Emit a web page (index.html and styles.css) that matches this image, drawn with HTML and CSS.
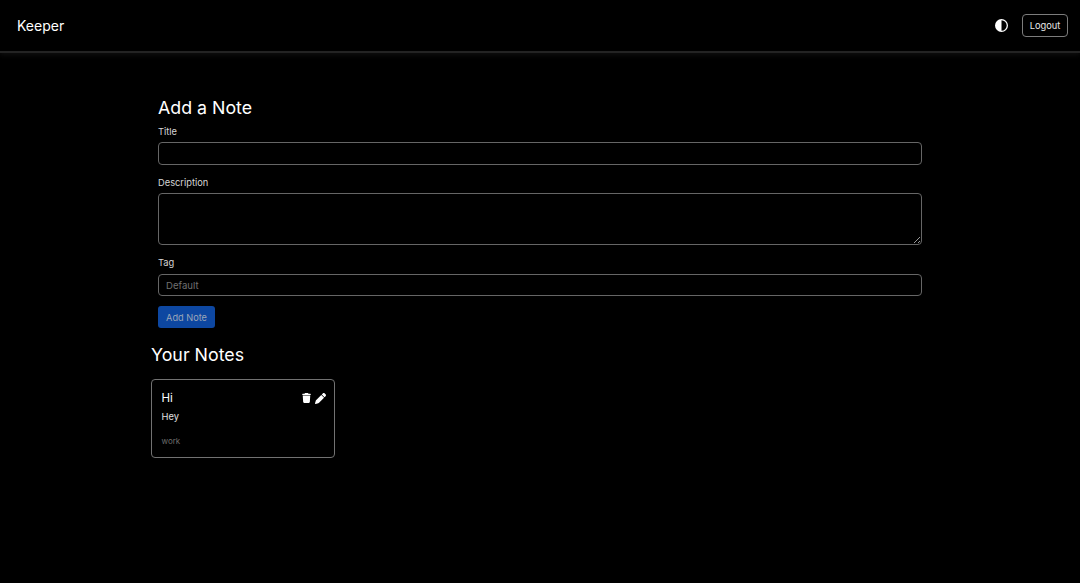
FILE: index.html
```html
<!DOCTYPE html>
<html lang="en">
<head>
<meta charset="utf-8">
<title>Keeper</title>
<link rel="stylesheet" href="styles.css">
</head>
<body>
<nav class="navbar">
  <span class="brand">Keeper</span>
  <div class="nav-actions">
    <svg class="theme-icon" viewBox="0 0 16 16" aria-hidden="true"><path fill="#fff" d="M8 0a8 8 0 1 0 0 16A8 8 0 0 0 8 0zm0 1.6v12.8A6.4 6.4 0 0 1 8 1.6z" transform="matrix(-1 0 0 1 16 0)"/></svg>
    <button class="logout">Logout</button>
  </div>
</nav>
<main class="container">
  <section class="add-note">
    <h2 class="heading">Add a Note</h2>
    <label class="label" for="title">Title</label>
    <input class="field" id="title" type="text">
    <label class="label" for="description">Description</label>
    <textarea class="field area" id="description"></textarea>
    <label class="label" for="tag">Tag</label>
    <input class="field" id="tag" type="text" placeholder="Default">
    <button class="submit">Add Note</button>
  </section>
  <h2 class="heading notes-heading">Your Notes</h2>
  <article class="card">
    <div class="card-top">
      <h3 class="card-title">Hi</h3>
      <div class="card-icons">
        <svg class="icon trash" viewBox="0 0 448 512" aria-hidden="true"><path fill="#fff" d="M135.2 17.7L128 32H32C14.3 32 0 46.3 0 64S14.3 96 32 96H416c17.7 0 32-14.3 32-32s-14.3-32-32-32H320l-7.2-14.3C307.4 6.8 296.3 0 284.2 0H163.8c-12.1 0-23.2 6.8-28.6 17.7zM416 128H32L53.2 467c1.6 25.3 22.6 45 47.9 45H346.9c25.3 0 46.3-19.7 47.9-45L416 128z"/></svg>
        <svg class="icon pen" viewBox="0 0 512 512" aria-hidden="true"><path fill="#fff" d="M362.7 19.3L314.3 67.7 444.3 197.7l48.4-48.4c25-25 25-65.5 0-90.5L453.3 19.3c-25-25-65.5-25-90.5 0zm-71 71L58.6 323.5c-10.4 10.4-18 23.3-22.2 37.4L1 481.2C-1.5 489.7 .8 498.8 7 505s15.3 8.5 23.7 6.1l120.3-35.4c14.1-4.2 27-11.8 37.4-22.2L421.7 220.3 291.7 90.3z"/></svg>
      </div>
    </div>
    <p class="card-text">Hey</p>
    <p class="card-tag">work</p>
  </article>
</main>
</body>
</html>
```

FILE: styles.css
```css
* { box-sizing: border-box; }
html, body { margin: 0; height: 100%; }
body {
  background: #000;
  color: #fff;
  font-family: Inter, "Liberation Sans", sans-serif;
  font-size: 10px;
  overflow: hidden;
}
.navbar {
  height: 53px;
  display: flex;
  align-items: center;
  justify-content: space-between;
  padding: 0 12px 0 17px;
  border-bottom: 2px solid #232323;
  box-shadow: 0 2px 5px rgba(255, 255, 255, 0.06);
}
.brand { font-size: 14px; line-height: 20px; }
.nav-actions { display: flex; align-items: center; gap: 14px; }
.theme-icon { width: 13px; height: 13px; display: block; }
.logout {
  width: 46px;
  height: 23px;
  padding: 0;
  background: transparent;
  color: #e6e6e6;
  font: 9.3px Inter, "Liberation Sans", sans-serif;
  border: 1px solid #7c7c7c;
  border-radius: 4px;
}
.container { width: 778px; margin: 0 auto; padding-top: 43px; }
.add-note { display: flex; flex-direction: column; align-items: flex-start; padding: 0 7px; }
.heading { margin: 0; font-size: 17.8px; font-weight: 400; line-height: 24px; }
.label { font-size: 9.3px; line-height: 12px; color: #d6d6d6; margin-bottom: 4px; }
.add-note .heading + .label { margin-top: 6px; }
.field {
  display: block;
  width: 100%;
  height: 23px;
  margin: 0 0 12px;
  padding: 0 7px;
  background: #000;
  color: #fff;
  border: 1px solid #666;
  border-radius: 4px;
  font: 9.6px Inter, "Liberation Sans", sans-serif;
}
.field::placeholder { color: #707070; opacity: 1; }
.area { height: 52px; }
#tag { height: 22px; margin-top: 1px; margin-bottom: 10px; }
.submit {
  width: 57px;
  height: 22px;
  padding: 0;
  background: #0d47a1;
  color: #9aa6b8;
  border: 0;
  border-radius: 3px;
  font: 9.2px Inter, "Liberation Sans", sans-serif;
}
.notes-heading { margin-top: 15px; }
.card {
  width: 184px;
  height: 79px;
  margin-top: 12px;
  padding: 11px 8px 0 9.5px;
  border: 1px solid #727272;
  border-radius: 4px;
}
.card-top { display: flex; align-items: center; justify-content: space-between; height: 14px; }
.card-title { margin: 0; font-size: 11.5px; font-weight: 400; line-height: 14px; }
.card-icons { display: flex; align-items: center; gap: 4px; }
.icon { display: block; height: 10px; }
.trash { width: 9px; }
.pen { width: 11px; height: 11px; }
.card-text { margin: 6px 0 0; font-size: 9.3px; line-height: 12px; color: #e0e0e0; }
.card-tag { margin: 12px 0 0; font-size: 8px; line-height: 12px; color: #6c6c6c; }
```
